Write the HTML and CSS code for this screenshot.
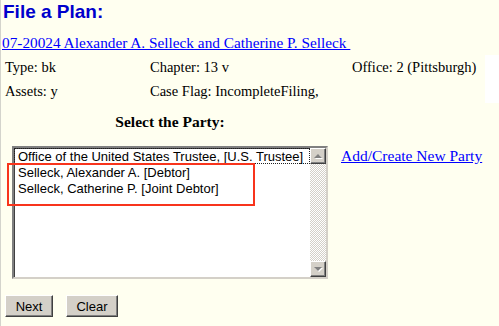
FILE: index.html
```
<!DOCTYPE html>
<html lang="en">
<head>
    <meta charset="UTF-8">
    <meta name="viewport" content="width=device-width, initial-scale=1.0">
    <title>File a Plan</title>
    <link rel="stylesheet" href="styles.css">
</head>
<body>

<div class="page">
    <h1 class="page-title">File a Plan:</h1>
    <a class="case-link" href="#">07-20024 Alexander A. Selleck and Catherine P. Selleck&nbsp;</a>

    <div class="case-info">
        <div>Type: bk</div>
        <div>Chapter: 13 v</div>
        <div>Office: 2 (Pittsburgh)</div>
        <div class="blank"></div>
        <div>Assets: y</div>
        <div>Case Flag: IncompleteFiling,</div>
        <div></div>
        <div class="blank"></div>
    </div>

    <div class="party-title">Select the Party:</div>

    <div class="party">
        <div class="listbox">
            <div class="options">
                <div class="option focused">Office of the United States Trustee, [U.S. Trustee]</div>
                <div class="option">Selleck, Alexander A. [Debtor]</div>
                <div class="option">Selleck, Catherine P. [Joint Debtor]</div>
            </div>
            <div class="scrollbar">
                <div class="scroll-btn"><span class="arrow up"></span></div>
                <div class="scroll-track"></div>
                <div class="scroll-btn"><span class="arrow down"></span></div>
            </div>
            <!-- highlight drawn over the two debtors -->
            <div class="marker"></div>
        </div>
        <a class="party-link" href="#">Add/Create New Party</a>
    </div>

    <div class="buttons">
        <button class="btn next">Next</button>
        <button class="btn clear">Clear</button>
    </div>
</div>

</body>
</html>
```

FILE: styles.css
```
body {
    margin: 0;
    background-color: #fffff0;
    font-family: "Liberation Serif", "Times New Roman", serif;
    color: #000;
}
.page {
    min-height: 100vh;
    box-sizing: border-box;
    border-left: 1px solid #d4d4cc;
}
.page-title {
    margin: 0;
    padding: 0 0 0 2px;
    font-family: "Liberation Sans", Arial, sans-serif;
    font-size: 19px;
    line-height: 23px;
    font-weight: bold;
    color: #0000cc;
}
.case-link {
    display: inline-block;
    margin: 11px 0 0 1px;
    font-size: 15.3px;
    line-height: 18px;
    color: #0000ff;
}
.case-info {
    display: grid;
    grid-template-columns: 145px 202px 133px 1fr;
    grid-auto-rows: 24px;
    padding-left: 4px;
    margin-top: 3px;
    font-size: 14.5px;
    line-height: 24px;
}
.case-info .blank {
    background-color: #fff;
}
.party-title {
    width: 316px;
    margin: 9px 0 0 11px;
    text-align: center;
    font-size: 15.5px;
    font-weight: bold;
    line-height: 20px;
}
.party {
    display: flex;
    align-items: flex-start;
    gap: 13px;
    margin: 14px 0 0 11px;
}
.listbox {
    position: relative;
    display: flex;
    width: 316px;
    height: 133px;
    box-sizing: border-box;
    border: 2px solid;
    border-color: #808080 #d4d0c8 #d4d0c8 #808080;
    box-shadow: inset 1px 1px #404040;
    background-color: #fff;
}
.options {
    flex: 1;
    font-family: "Liberation Sans", Arial, sans-serif;
    font-size: 13px;
}
.option {
    height: 16px;
    line-height: 16px;
    padding-left: 3px;
    border: 1px solid transparent;
    box-sizing: border-box;
    white-space: nowrap;
}
.option.focused {
    border: 1px dotted #202020;
}
.scrollbar {
    display: flex;
    flex-direction: column;
    width: 16px;
}
.scroll-track {
    flex: 1;
    background: repeating-conic-gradient(#d4d0c8 0 25%, #fff 0 50%) 0 0 / 2px 2px;
}
.scroll-btn {
    width: 16px;
    height: 16px;
    box-sizing: border-box;
    display: flex;
    align-items: center;
    justify-content: center;
    background-color: #d4d0c8;
    border: 1px solid;
    border-color: #fff #404040 #404040 #fff;
    box-shadow: inset -1px -1px #808080;
}
.arrow {
    width: 0;
    height: 0;
    border-left: 4px solid transparent;
    border-right: 4px solid transparent;
}
.arrow.up {
    border-bottom: 4px solid #808080;
    filter: drop-shadow(1px 1px 0 #fff);
}
.arrow.down {
    border-top: 4px solid #808080;
    filter: drop-shadow(1px 1px 0 #fff);
}
.marker {
    position: absolute;
    left: -7px;
    top: 15px;
    width: 248px;
    height: 43px;
    box-sizing: border-box;
    border: 2px solid #f8341c;
}
.party-link {
    margin-top: 1px;
    font-size: 15.5px;
    line-height: 18px;
    color: #0000ff;
}
.buttons {
    display: flex;
    gap: 13px;
    margin: 16px 0 0 4px;
}
.btn {
    height: 22px;
    padding: 0 9px;
    font-family: "Liberation Sans", Arial, sans-serif;
    font-size: 13px;
    color: #000;
    background-color: #d4d0c8;
    border: 1px solid;
    border-color: #fff #404040 #404040 #fff;
    box-shadow: inset -1px -1px #808080;
    border-radius: 0;
}
.btn.next {
    width: 48px;
}
.btn.clear {
    width: 52px;
}
```
